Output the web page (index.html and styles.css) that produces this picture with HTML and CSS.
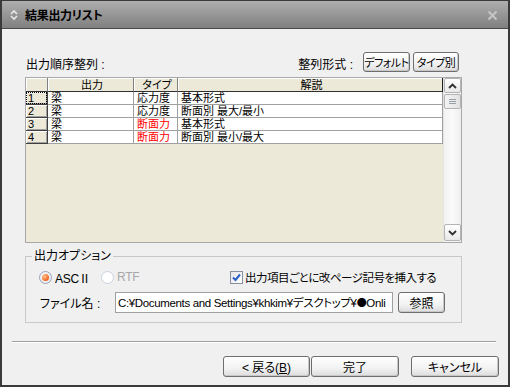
FILE: index.html
```html
<!DOCTYPE html>
<html lang="ja">

<head>
    <meta charset="UTF-8">
    <title>結果出力リスト</title>
    <link rel="stylesheet" href="styles.css">
</head>

<body>
    <div class="window">
        <div class="titlebar">
            <svg class="title-icon" width="8" height="12" viewBox="0 0 8 12">
                <path d="M1 5 L4 2 L7 5 M1 7 L4 10 L7 7" fill="none" stroke="#e8e8e8" stroke-width="1.6" />
            </svg>
            <span class="title-text">結果出力リスト</span>
            <svg class="title-close" width="11" height="11" viewBox="0 0 11 11">
                <path d="M1.5 1.5 L9.5 9.5 M9.5 1.5 L1.5 9.5" stroke="#c4c4c4" stroke-width="2.2" />
            </svg>
        </div>

        <div class="content">
            <div class="sort-row">
                <span class="sort-label">出力順序整列 :</span>
                <div class="sort-mode">
                    <span class="sort-mode-label">整列形式 :</span>
                    <button class="btn btn-small">デフォルト</button>
                    <button class="btn btn-small">タイプ別</button>
                </div>
            </div>

            <div class="grid">
                <div class="grid-main">
                    <table class="list">
                        <colgroup>
                            <col style="width: 22px">
                            <col style="width: 86px">
                            <col style="width: 44px">
                            <col style="width: 265px">
                        </colgroup>
                        <thead>
                            <tr>
                                <th class="corner"></th>
                                <th>出力</th>
                                <th>タイプ</th>
                                <th class="last">解説</th>
                            </tr>
                        </thead>
                        <tbody>
                            <tr>
                                <td class="rowhead focus"><span>1</span></td>
                                <td>梁</td>
                                <td>応力度</td>
                                <td>基本形式</td>
                            </tr>
                            <tr>
                                <td class="rowhead"><span>2</span></td>
                                <td>梁</td>
                                <td>応力度</td>
                                <td>断面別 最大/最小</td>
                            </tr>
                            <tr>
                                <td class="rowhead"><span>3</span></td>
                                <td>梁</td>
                                <td class="red">断面力</td>
                                <td>基本形式</td>
                            </tr>
                            <tr>
                                <td class="rowhead"><span>4</span></td>
                                <td>梁</td>
                                <td class="red">断面力</td>
                                <td>断面別 最小/最大</td>
                            </tr>
                        </tbody>
                    </table>
                </div>
                <div class="scrollbar">
                    <div class="sb-btn">
                        <svg width="9" height="6" viewBox="0 0 9 6">
                            <path d="M1 5 L4.5 1.5 L8 5" fill="none" stroke="#303030" stroke-width="1.8" />
                        </svg>
                    </div>
                    <div class="sb-thumb">
                        <svg width="7" height="6" viewBox="0 0 7 6">
                            <path d="M0 0.5 H7 M0 2.5 H7 M0 4.5 H7" stroke="#9aa0a8" stroke-width="1" />
                        </svg>
                    </div>
                    <div class="sb-track"></div>
                    <div class="sb-btn sb-down">
                        <svg width="9" height="6" viewBox="0 0 9 6">
                            <path d="M1 1 L4.5 4.5 L8 1" fill="none" stroke="#303030" stroke-width="1.8" />
                        </svg>
                    </div>
                </div>
            </div>

            <fieldset class="options">
                <legend>出力オプション</legend>
                <div class="opt-row">
                    <div class="radios">
                        <label class="radio radio-ascii"><span class="radio-dot checked"></span>ASCⅡ</label>
                        <label class="radio disabled"><span class="radio-dot"></span>RTF</label>
                    </div>
                    <label class="check">
                        <span class="check-box">
                            <svg width="9" height="9" viewBox="0 0 9 9">
                                <path d="M1 4.5 L3.5 7 L8 1.5" fill="none" stroke="#2a5fc8" stroke-width="2" />
                            </svg>
                        </span>
                        <span class="check-text">出力項目ごとに改ページ記号を挿入する</span>
                    </label>
                </div>
                <div class="file-row">
                    <span class="file-label">ファイル名 :</span>
                    <div class="file-input">C:¥Documents and Settings¥khkim¥デスクトップ¥<span class="dot">●</span>Onli</div>
                    <button class="btn btn-browse">参照</button>
                </div>
            </fieldset>
        </div>

        <div class="separator"></div>

        <div class="footer-buttons">
            <button class="btn btn-wide">&lt; 戻る(<u>B</u>)</button>
            <button class="btn btn-wide btn-finish">完了</button>
            <button class="btn btn-wide btn-cancel">キャンセル</button>
        </div>
    </div>
</body>

</html>
```

FILE: styles.css
```css
* {
    margin: 0;
    padding: 0;
    box-sizing: border-box;
}

body {
    font-family: "Liberation Sans", "Noto Sans CJK JP", sans-serif;
    font-size: 12px;
    font-feature-settings: "palt";
    color: #000;
    background: #f0f0f0;
}

.window {
    width: 510px;
    height: 387px;
    border: 2px solid #3a3a3a;
    border-top-width: 1px;
    background: #f0f0f0;
}

/* title bar */
.titlebar {
    height: 28px;
    display: flex;
    align-items: center;
    padding: 0 10px 0 8px;
    background: linear-gradient(#aeaeae, #999999 45%, #808080);
    border-bottom: 1px solid #4a4a4a;
}

.title-icon {
    margin-right: 7px;
}

.title-text {
    font-weight: bold;
    font-size: 12px;
    letter-spacing: -0.3px;
    color: #000;
    flex: 1;
}

.title-close {
    margin-top: 1px;
}

/* main area */
.content {
    padding: 23px 0 0 23px;
    width: 460px;
}

.sort-row {
    display: flex;
    justify-content: space-between;
    align-items: center;
    height: 20px;
    padding-right: 3px;
}

.sort-label {
    padding-top: 2px;
    padding-left: 1px;
}

.sort-mode {
    display: flex;
    align-items: center;
}

.sort-mode-label {
    margin-right: 7px;
    padding-top: 3px;
}

.btn {
    font-family: inherit;
    font-size: 12px;
    font-feature-settings: "palt";
    color: #000;
    border: 1px solid #6e6e6e;
    border-radius: 3px;
    background: linear-gradient(#ffffff, #f2f2f2 60%, #dcdcdc);
    box-shadow: inset -1px -1px 0 #c8c8c8;
}

.btn-small {
    height: 20px;
    width: 47px;
    font-size: 11px;
    letter-spacing: -0.5px;
    margin-left: 3px;
}

.btn-small + .btn-small {
    width: 46px;
}

/* list grid */
.grid {
    margin-top: 5px;
    width: 437px;
    height: 166px;
    display: flex;
    border: 1px solid #a8a8a8;
}

.grid-main {
    width: 417px;
    background: #ece9d8;
}

.list {
    table-layout: fixed;
    width: 417px;
    border-collapse: separate;
    border-spacing: 0;
    font-size: 11px;
}

.list th,
.list td {
    height: 13px;
    line-height: 12px;
    padding: 0 0 0 3px;
    text-align: left;
    white-space: nowrap;
    overflow: hidden;
    border-right: 1px solid #a0a0a0;
    border-bottom: 1px solid #a0a0a0;
    background: #fff;
    font-weight: normal;
}

.list th {
    height: 14px;
    text-align: center;
    background: #ece9d8;
    border-right: 1px solid #808080;
    border-bottom: 1px solid #303030;
    box-shadow: inset 1px 1px 0 #fff;
}

.list th.last {
    border-right-color: #202020;
}

.list td.rowhead {
    padding: 0;
    background: #ece9d8;
    border-right: 1px solid #404040;
    border-bottom: 1px solid #404040;
    box-shadow: inset 1px 1px 0 #fff, inset -1px -1px 0 #a0a0a0;
}

.rowhead span {
    display: block;
    height: 12px;
    padding-left: 2px;
}

.rowhead.focus span {
    outline: 1px dotted #000;
    outline-offset: -1px;
}

.list td.red {
    color: #ff0000;
}

.scrollbar {
    width: 18px;
    display: flex;
    flex-direction: column;
    background: linear-gradient(90deg, #f2f2f2, #fafafa 50%, #eeeeee);
    border-left: 1px solid #e4e4e4;
}

.sb-btn,
.sb-thumb {
    height: 15px;
    display: flex;
    align-items: center;
    justify-content: center;
    border: 1px solid #b4b4b4;
    border-radius: 2px;
    background: linear-gradient(#ffffff, #e8e8e8);
}

.sb-thumb {
    margin-top: 1px;
    background: linear-gradient(90deg, #f4f4f4, #e2e2e2);
}

.sb-track {
    flex: 1;
}

.sb-down {
    height: 17px;
    margin-bottom: 1px;
}

/* output options */
.options {
    margin-top: 6px;
    width: 437px;
    border: 1px solid #c8c8c8;
    padding: 0 13px 9px 13px;
}

.options legend {
    margin-left: -7px;
    padding: 0 2px;
    line-height: 14px;
}

.opt-row {
    display: flex;
    align-items: center;
    height: 16px;
    margin-top: 6px;
}

.radios {
    display: flex;
    width: 191px;
}

.radio {
    display: flex;
    align-items: center;
    letter-spacing: -0.3px;
}

.radio-ascii {
    width: 62px;
}

.radio-dot {
    width: 13px;
    height: 13px;
    border-radius: 50%;
    border: 1px solid #9aa4b4;
    background: radial-gradient(circle at 40% 40%, #ffffff, #dde2ea);
    margin-right: 3px;
    position: relative;
}

.radio-dot.checked::after {
    content: "";
    position: absolute;
    left: 2px;
    top: 2px;
    width: 7px;
    height: 7px;
    border-radius: 50%;
    background: radial-gradient(circle at 35% 35%, #ffc890, #f06020 70%);
}

.radio.disabled {
    color: #a8a8a8;
}

.radio.disabled .radio-dot {
    border-color: #c8d2de;
    background: #fff;
}

.check {
    display: flex;
    align-items: center;
}

.check-box {
    width: 13px;
    height: 13px;
    border: 1px solid #8890a0;
    background: linear-gradient(135deg, #e6e6ea, #ffffff);
    display: flex;
    align-items: center;
    justify-content: center;
    margin-right: 2px;
}

.check-text {
    white-space: nowrap;
    font-size: 11.5px;
    letter-spacing: -0.5px;
}

.file-row {
    display: flex;
    align-items: center;
    margin-top: 7px;
    height: 21px;
}

.file-label {
    width: 76px;
    padding-left: 1px;
}

.file-input {
    width: 278px;
    height: 21px;
    line-height: 19px;
    padding-left: 2px;
    border: 1px solid #a0a0a0;
    background: #fff;
    white-space: nowrap;
    overflow: hidden;
    font-size: 11.5px;
    letter-spacing: -0.35px;
}

.file-input .dot {
    font-family: "Noto Sans CJK JP", sans-serif;
    font-size: 10px;
}

.btn-browse {
    width: 47px;
    height: 21px;
    margin-left: 5px;
}

/* bottom */
.separator {
    margin: 18px 0 0 10px;
    width: 484px;
    height: 2px;
    border-top: 1px solid #a0a0a0;
    border-bottom: 1px solid #ffffff;
}

.footer-buttons {
    display: flex;
    justify-content: flex-end;
    margin-top: 13px;
    padding-right: 9px;
}

.btn-wide {
    width: 87px;
    height: 21px;
}

.btn-finish {
    width: 88px;
    margin-left: 1px;
}

.btn-cancel {
    width: 88px;
    margin-left: 12px;
}
```
